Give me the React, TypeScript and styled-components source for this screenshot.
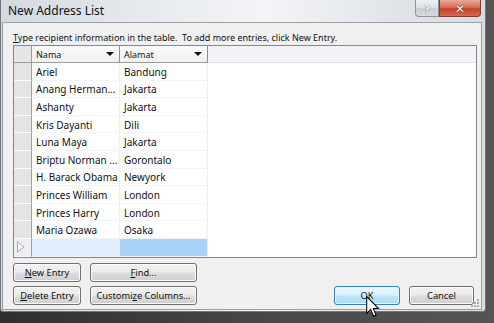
import styled, { createGlobalStyle } from "styled-components";

const GlobalStyle = createGlobalStyle`
  html, body {
    margin: 0;
    padding: 0;
    overflow: hidden;
    background: #3c3c3c;
  }
  body {
    font-family: "Noto Sans", "DejaVu Sans", sans-serif;
  }
`;

const Page = styled.div`
  position: relative;
  width: 494px;
  height: 323px;
  background: linear-gradient(90deg, #2f2f2f 0%, #4a4a4a 60%, #555 100%);
`;

const Window = styled.div`
  width: 486px;
  height: 312px;
  box-sizing: border-box;
  display: flex;
  flex-direction: column;
  padding: 0 3px 1px 1px;
  border: 1px solid #70767d;
  border-top: none;
  border-radius: 0 0 3px 3px;
  background: linear-gradient(90deg, #d3d9df 0%, #e6eaee 30%, #f3f5f7 55%, #e1e5ea 80%, #d8dde3 100%);
`;

const TitleBar = styled.div`
  height: 22px;
  flex-shrink: 0;
  display: flex;
  align-items: flex-start;
  padding-left: 6px;
`;

const Title = styled.span`
  font-size: 12px;
  line-height: 22px;
  color: #111;
`;

const Caption = styled.div`
  margin-left: auto;
  margin-right: 1px;
  display: flex;
`;

const CaptionButton = styled.div<{ $close?: boolean }>`
  width: ${(p) => (p.$close ? 42 : 24)}px;
  height: 17px;
  box-sizing: border-box;
  display: flex;
  align-items: center;
  justify-content: center;
  font-size: ${(p) => (p.$close ? 12 : 11)}px;
  font-weight: bold;
  color: #fff;
  border: 1px solid ${(p) => (p.$close ? "#8a3a2c" : "#8e949c")};
  border-top: none;
  border-radius: ${(p) => (p.$close ? "0 0 4px 0" : "0 0 0 4px")};
  background: ${(p) =>
    p.$close
      ? "linear-gradient(#e9a998 0%, #d9715b 45%, #c2412a 55%, #d66a52 100%)"
      : "linear-gradient(#eef0f3 0%, #dde1e6 45%, #c9ced5 55%, #d6dbe1 100%)"};
  text-shadow: ${(p) =>
    p.$close
      ? "0 0 1px #5a1c12, 0 0 1px #5a1c12"
      : "0 0 1px #6b7077, 0 0 1px #6b7077"};
`;

const Client = styled.div`
  position: relative;
  flex: 1;
  display: flex;
  flex-direction: column;
  padding: 7px 4px 4px 10px;
  background: #f0f0f0;
  border: 1px solid #9aa0a7;
`;

const Hint = styled.div`
  font-size: 9px;
  line-height: 15px;
  height: 15px;
  color: #111;
  white-space: nowrap;
`;

const Table = styled.div`
  height: 213px;
  box-sizing: border-box;
  border: 1px solid #82878f;
  background: #fff;
  overflow: hidden;
`;

const HeaderRow = styled.div`
  display: grid;
  grid-template-columns: 18px 88px 88px 1fr;
  height: 17px;
`;

const Corner = styled.div`
  background: #e6e6e6;
  border-right: 1px solid #9c9c9c;
  border-bottom: 1px solid #9c9c9c;
`;

const HeaderCell = styled.div`
  display: flex;
  align-items: center;
  justify-content: space-between;
  padding: 0 5px 0 4px;
  font-size: 9px;
  color: #111;
  background: linear-gradient(#fbfbfb, #f0f0f0);
  border-right: 1px solid #8d8d8d;
  border-bottom: 1px solid #9c9c9c;
`;

const Arrow = styled.span`
  width: 0;
  height: 0;
  border-left: 4px solid transparent;
  border-right: 4px solid transparent;
  border-top: 4px solid #111;
`;

const HeaderFill = styled.div`
  background: #f2f3f5;
  border-bottom: 1px solid #dcdfe3;
`;

const Row = styled.div`
  display: grid;
  grid-template-columns: 18px 88px 88px;
  height: 17.6px;
`;

const RowHead = styled.div<{ $current?: boolean }>`
  display: flex;
  align-items: center;
  padding-left: 3px;
  background: ${(p) => (p.$current ? "#eceef0" : "#e4e4e4")};
  border-right: 1px solid #9c9c9c;
  border-bottom: 1px solid #fbfbfb;
`;

const Cell = styled.div<{ $fill?: string }>`
  display: flex;
  align-items: center;
  padding: 1px 0 0 4px;
  font-size: 10px;
  color: #111;
  white-space: nowrap;
  overflow: hidden;
  background: ${(p) => p.$fill || "#fff"};
  border-right: 1px solid #eef0f2;
  border-bottom: 1px solid #f3f4f5;
`;

const Footer = styled.div`
  margin-top: 5px;
  margin-right: 3px;
  display: flex;
  justify-content: space-between;
  align-items: flex-end;
`;

const LeftButtons = styled.div`
  display: grid;
  grid-template-columns: 68px 107px;
  grid-auto-rows: 19px;
  gap: 4px 9px;
`;

const RightButtons = styled.div`
  display: flex;
  gap: 9px;
`;

const Button = styled.div<{ $hot?: boolean; $w?: number }>`
  width: ${(p) => (p.$w ? `${p.$w}px` : "auto")};
  height: 19px;
  box-sizing: border-box;
  display: flex;
  align-items: center;
  justify-content: center;
  font-size: 9.3px;
  color: #111;
  border-radius: 3px;
  border: 1px solid ${(p) => (p.$hot ? "#3c7fb1" : "#707070")};
  box-shadow: inset 0 0 0 1px ${(p) => (p.$hot ? "#e6f5fd" : "#fbfbfb")};
  background: ${(p) =>
    p.$hot
      ? "linear-gradient(#eaf6fd 0%, #d9f0fc 48%, #bee6fd 52%, #a7d9f5 100%)"
      : "linear-gradient(#f2f2f2 0%, #ebebeb 48%, #dddddd 52%, #cfcfcf 100%)"};
`;

const Cursor = styled.svg`
  position: absolute;
  left: 366px;
  top: 296px;
`;

const Grip = styled.svg`
  position: absolute;
  right: 1px;
  bottom: 1px;
`;

const rows: [string, string][] = [
  ["Ariel", "Bandung"],
  ["Anang Herman...", "Jakarta"],
  ["Ashanty", "Jakarta"],
  ["Kris Dayanti", "Dili"],
  ["Luna Maya", "Jakarta"],
  ["Briptu Norman ...", "Gorontalo"],
  ["H. Barack Obama", "Newyork"],
  ["Princes William", "London"],
  ["Princes Harry", "London"],
  ["Maria Ozawa", "Osaka"],
];

export default function App() {
  return (
    <Page>
      <GlobalStyle />
      <Window>
        <TitleBar>
          <Title>New Address List</Title>
          <Caption>
            <CaptionButton>?</CaptionButton>
            <CaptionButton $close>✕</CaptionButton>
          </Caption>
        </TitleBar>
        <Client>
          <Hint>
            <u>T</u>ype recipient information in the table.&nbsp; To add more entries, click New Entry.
          </Hint>
          <Table>
            <HeaderRow>
              <Corner />
              <HeaderCell>
                Nama <Arrow />
              </HeaderCell>
              <HeaderCell>
                Alamat <Arrow />
              </HeaderCell>
              <HeaderFill />
            </HeaderRow>
            {rows.map(([nama, alamat]) => (
              <Row key={nama}>
                <RowHead />
                <Cell>{nama}</Cell>
                <Cell>{alamat}</Cell>
              </Row>
            ))}
            <Row>
              <RowHead $current>
                <svg width="8" height="12" viewBox="0 0 8 12">
                  <path d="M0.5 0.8 L7 6 L0.5 11.2 Z" fill="#fff" stroke="#98a8c4" />
                </svg>
              </RowHead>
              <Cell $fill="#dfedfc" />
              <Cell $fill="#abd2f8" />
            </Row>
          </Table>
          <Footer>
            <LeftButtons>
              <Button>
                <u>N</u>ew Entry
              </Button>
              <Button>
                <u>F</u>ind...
              </Button>
              <Button>
                <u>D</u>elete Entry
              </Button>
              <Button>
                Customi<u>z</u>e Columns...
              </Button>
            </LeftButtons>
            <RightButtons>
              <Button $hot $w={66}>
                OK
              </Button>
              <Button $w={65}>Cancel</Button>
            </RightButtons>
          </Footer>
          <Grip width="10" height="10" viewBox="0 0 10 10">
            {[
              [8, 2],
              [8, 5],
              [5, 5],
              [8, 8],
              [5, 8],
              [2, 8],
            ].map(([x, y]) => (
              <rect key={`${x}-${y}`} x={x - 1} y={y - 1} width="2" height="2" fill="#a9adb2" />
            ))}
          </Grip>
        </Client>
      </Window>
      <Cursor width="14" height="22" viewBox="0 0 13 21">
        <path
          d="M0.5 0.5 L0.5 16.5 L4.3 12.8 L7 19.3 L9.4 18.3 L6.8 12 L11.8 12 Z"
          fill="#fff"
          stroke="#000"
          strokeWidth="1"
          strokeLinejoin="miter"
        />
      </Cursor>
    </Page>
  );
}
